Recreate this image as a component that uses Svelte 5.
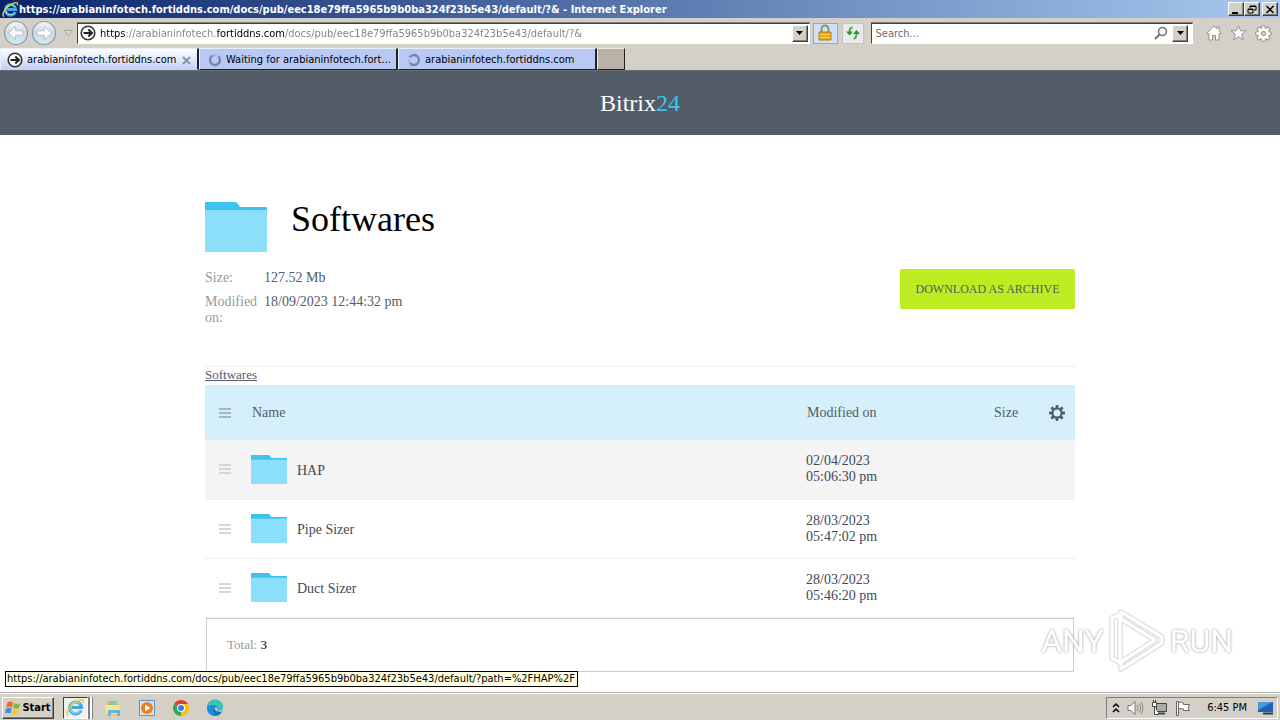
<script lang="ts">
  const host = 'arabianinfotech.fortiddns.com'
  const url = `https://${host}/docs/pub/eec18e79ffa5965b9b0ba324f23b5e43/default/`

  let address = $state(`${url}?&`)
  let search = $state('')

  const folders = [
    { name: 'HAP', date: '02/04/2023', time: '05:06:30 pm' },
    { name: 'Pipe Sizer', date: '28/03/2023', time: '05:47:02 pm' },
    { name: 'Duct Sizer', date: '28/03/2023', time: '05:46:20 pm' },
  ]

  // one gear tooth every 45 degrees
  const teeth = [0, 45, 90, 135, 180, 225, 270, 315]
</script>

{#snippet ie(size: number)}
  <svg width={size} height={size} viewBox="0 0 18 18" aria-hidden="true">
    <path d="M14.2 11.8A5.600 5.600 0 1 1 14.700 9H5.500" fill="none" stroke="#3ba9ea" stroke-width="3" />
    <path d="M13.500 12A5.200 5.200 0 0 1 4 10.500M4.500 6.500A5.400 5.400 0 0 1 13.500 6" fill="none" stroke="#a5e0fb" stroke-width="1" />
    <path d="M2.200 16.600C-1 15 3 8 8 4.600S17.500.3 16.300 4.600" fill="none" stroke="#f3c92f" stroke-width="1.500" />
  </svg>
{/snippet}

{#snippet favicon()}
  <svg width="16" height="16" viewBox="0 0 16 16" aria-hidden="true">
    <circle cx="8" cy="8" r="6.800" fill="#fff" stroke="#333" stroke-width="1.600" />
    <path d="M3.500 8h8M8.300 4.500 12 8l-3.700 3.500" fill="none" stroke="#222" stroke-width="2" />
  </svg>
{/snippet}

{#snippet spinner(turn: number)}
  <svg width="14" height="14" viewBox="0 0 14 14" aria-hidden="true">
    <g transform="rotate({turn} 7 7)" fill="none" stroke-width="2.400">
      <path d="M7 2a5 5 0 1 1-4.600 3" stroke="#7a86a4" />
      <path d="M2.400 5A5 5 0 0 1 5 2.400" stroke="#a9b4d8" />
    </g>
  </svg>
{/snippet}

{#snippet arrow(flip: boolean)}
  <svg width="26" height="26" viewBox="0 0 26 26" aria-hidden="true">
    <circle cx="13" cy="13" r="11.500" fill="url(#orb)" stroke="#8c99a6" stroke-width="1.200" />
    <path
      transform={flip ? 'rotate(180 13 13)' : undefined}
      d="M5.500 13l7-6.500v4.300h7.500v4.400h-7.500v4.300z"
      fill="#fff"
      stroke="#a9b6c2"
      stroke-width=".8"
    />
  </svg>
{/snippet}

{#snippet folder(width: number, height: number)}
  <svg {width} {height} viewBox="0 0 62 50" preserveAspectRatio="none" aria-hidden="true">
    <path d="M0 1q0-1 1-1h29q2 0 3 2l2 3h26q1 0 1 1v8H0z" fill="#3cc4ef" />
    <path d="M0 8h62v41q0 1-1 1H1q-1 0-1-1z" fill="#8bdffa" />
  </svg>
{/snippet}

{#snippet lines()}
  <svg width="12" height="10" viewBox="0 0 12 10" aria-hidden="true">
    <path d="M0 1h12M0 5h12M0 9h12" stroke="currentColor" stroke-width="1.600" />
  </svg>
{/snippet}

{#snippet caret()}
  <svg width="7" height="4" viewBox="0 0 7 4" aria-hidden="true"><path d="M0 0h7L3.500 4z" fill="#000" /></svg>
{/snippet}

<div class="screen">
  <svg class="defs" width="0" height="0" aria-hidden="true">
    <linearGradient id="orb" x1="0" y1="0" x2="0" y2="1">
      <stop offset="0" stop-color="#f6f8fa" />
      <stop offset=".5" stop-color="#ccd7e0" />
      <stop offset="1" stop-color="#d3edf6" />
    </linearGradient>
  </svg>

  <header class="titlebar">
    {@render ie(17)}
    <span class="title">{url}?& - Internet Explorer</span>
    <div class="window-buttons">
      <button class="raised" aria-label="Minimize">
        <svg width="10" height="9" viewBox="0 0 10 9"><path d="M1 8h6" stroke="#000" stroke-width="2" /></svg>
      </button>
      <button class="raised" aria-label="Restore">
        <svg width="10" height="9" viewBox="0 0 10 9">
          <path d="M3 3V1h6v4H7M3 1.500h6" fill="none" stroke="#000" />
          <path d="M1 4h5v4H1zM1 4.500h5" fill="none" stroke="#000" />
        </svg>
      </button>
      <button class="raised close" aria-label="Close">
        <svg width="10" height="9" viewBox="0 0 10 9"><path d="M1.500 1l7 7M8.500 1l-7 7" stroke="#000" stroke-width="1.500" /></svg>
      </button>
    </div>
  </header>

  <div class="toolbar">
    <nav class="history">
      <button aria-label="Back">{@render arrow(false)}</button>
      <button aria-label="Forward">{@render arrow(true)}</button>
      <button class="recent" aria-label="Recent pages">
        <svg width="9" height="6" viewBox="0 0 9 6"><path d="M.5.500h8l-4 5z" fill="#dedbd4" stroke="#aaa69d" /></svg>
      </button>
    </nav>
    <div class="field address">
      {@render favicon()}
      <input aria-label="Address" bind:value={address} spellcheck="false" />
      <button class="raised drop" aria-label="Show addresses">{@render caret()}</button>
    </div>
    <button class="tool lock" aria-label="Security report">
      <svg width="16" height="18" viewBox="0 0 16 18">
        <path d="M4.500 9V5a3.500 3.500 0 0 1 7 0v4" fill="none" stroke="#9b8b5a" stroke-width="2" />
        <path d="M2 8h12v8H2z" fill="#e5a91f" stroke="#b57d10" />
        <path d="M2.500 10.500h11M2.500 13.500h11" stroke="#f8d76a" />
      </svg>
    </button>
    <button class="tool" aria-label="Refresh">
      <svg width="16" height="16" viewBox="0 0 16 16">
        <path d="M7.500 2.500Q4.500 2.500 4.500 7M8.500 13.500q3 0 3-5" fill="none" stroke="#4da94f" stroke-width="2" />
        <path d="M1 6.500h7l-3.500 4zM8 9h7l-3.500-4z" fill="#2f9134" />
      </svg>
    </button>
    <div class="field search">
      <input aria-label="Search" placeholder="Search..." bind:value={search} />
      <button class="plain" aria-label="Search the web">
        <svg width="14" height="14" viewBox="0 0 14 14">
          <circle cx="8.500" cy="5.500" r="4" fill="none" stroke="#777" stroke-width="1.600" />
          <path d="M5.500 8.500L1 13" stroke="#777" stroke-width="2.200" />
        </svg>
      </button>
      <button class="raised drop" aria-label="Search providers">{@render caret()}</button>
    </div>
    <div class="commands">
      <button class="plain" aria-label="Home">
        <svg width="16" height="16" viewBox="0 0 16 16">
          <path d="M8 1L.8 8l1.400 1L3 8.500V15h3.500v-4.500h3V15H13V8.500l.8.500 1.400-1L13 5.800V2h-2v2z" fill="#fff" stroke="#929292" />
        </svg>
      </button>
      <button class="plain" aria-label="Favorites">
        <svg width="17" height="16" viewBox="0 0 17 16">
          <path d="M8.500.8l2 5h5.500l-4.300 3.500 1.600 5.500-4.800-3.200-4.800 3.200 1.600-5.500L1 5.800h5.500z" fill="#fff" stroke="#929292" />
        </svg>
      </button>
      <button class="plain" aria-label="Tools">
        <svg width="17" height="17" viewBox="-8.500 -8.500 17 17">
          {#each teeth as turn}
            <path transform="rotate({turn})" d="M-2-5l.6-2.800h2.800L2-5" fill="#fff" stroke="#929292" />
          {/each}
          <circle r="5.200" fill="#fff" />
          <circle r="2.200" fill="#d4d0c8" stroke="#929292" />
        </svg>
      </button>
    </div>
  </div>

  <div class="tabs" role="tablist">
    <div class="tab active">
      {@render favicon()}
      <button class="label" role="tab" aria-selected="true">{host}</button>
      <button class="plain" aria-label="Close tab">
        <svg width="9" height="9" viewBox="0 0 9 9"><path d="M1 1l7 7M8 1L1 8" stroke="#8b8fa0" stroke-width="1.800" /></svg>
      </button>
    </div>
    <div class="tab">
      {@render spinner(40)}
      <button class="label" role="tab" aria-selected="false">Waiting for arabianinfotech.fort...</button>
    </div>
    <div class="tab">
      {@render spinner(-60)}
      <button class="label" role="tab" aria-selected="false">{host}</button>
    </div>
    <button class="new-tab" aria-label="New tab"></button>
  </div>

  <main>
    <div class="brand">Bitrix<span>24</span></div>

    <div class="content">
      <div class="heading">
        {@render folder(62, 50)}
        <h1>Softwares</h1>
      </div>

      <div class="info">
        <dl>
          <dt>Size:</dt>
          <dd>127.52 Mb</dd>
          <dt>Modified on:</dt>
          <dd>18/09/2023 12:44:32 pm</dd>
        </dl>
        <button class="download">DOWNLOAD AS ARCHIVE</button>
      </div>

      <div class="crumbs"><a href="#softwares">Softwares</a></div>

      <table>
        <colgroup>
          <col class="col-drag" /><col /><col class="col-date" /><col class="col-size" /><col class="col-gear" />
        </colgroup>
        <thead>
          <tr>
            <th class="drag">{@render lines()}</th>
            <th>Name</th>
            <th>Modified on</th>
            <th>Size</th>
            <th>
              <button class="plain" aria-label="Configure columns">
                <svg width="16" height="16" viewBox="-8 -8 16 16">
                  {#each teeth as turn}
                    <path transform="rotate({turn})" d="M-1.700-4.500l.5-3.500h2.400l.5 3.500z" fill="#535c69" />
                  {/each}
                  <circle r="4.500" fill="none" stroke="#535c69" stroke-width="2" />
                </svg>
              </button>
            </th>
          </tr>
        </thead>
        <tbody>
          {#each folders as item, i}
            <tr class:hover={i === 0}>
              <td class="drag">{@render lines()}</td>
              <td>
                <a class="file" href="#{item.name}">
                  {@render folder(36, 29)}
                  <span>{item.name}</span>
                </a>
              </td>
              <td>{item.date}<br />{item.time}</td>
              <td></td>
              <td></td>
            </tr>
          {/each}
        </tbody>
      </table>

      <div class="total"><span>Total:</span> {folders.length}</div>
    </div>

    <div class="status">{url}?path=%2FHAP%2F</div>

    <div class="watermark">
      <span>ANY</span>
      <svg width="58" height="66" viewBox="0 0 58 66" aria-hidden="true">
        <g fill="none" stroke-linejoin="round">
          <g stroke="#dcdcdc" stroke-width="6">
            <path d="M12 7v48l-8-5V10z" />
            <path d="M13 4l41 25v6L13 61v-7l34-22-34-21z" />
          </g>
          <g stroke="#fff" stroke-width="3">
            <path d="M12 7v48l-8-5V10z" />
            <path d="M13 4l41 25v6L13 61v-7l34-22-34-21z" />
          </g>
        </g>
      </svg>
      <span>RUN</span>
    </div>
  </main>

  <footer class="taskbar">
    <button class="raised start">
      <svg width="17" height="16" viewBox="0 0 17 16" aria-hidden="true">
        <path d="M2.500 2.500q3-2 5.500 0L7 7.500q-3-1.500-5.800 0z" fill="#ec6a2c" />
        <path d="M9 3q3 1.800 6.500 0l-1.500 5q-3 1.500-6 0z" fill="#7fba3c" />
        <path d="M1 8.500q3-1.600 5.800 0l-1.300 5q-3-1.600-5.500 0z" fill="#3f8fdc" />
        <path d="M7.800 9q3 1.600 6 0l-1.500 5q-3 1.600-5.800 0z" fill="#f6c734" />
      </svg>
      Start
    </button>
    <div class="apps">
      <button class="running" aria-label="Internet Explorer">{@render ie(19)}</button>
      <button class="plain" aria-label="Explorer">
        <svg width="18" height="18" viewBox="0 0 18 18">
          <path d="M2 3h5l1 2h7v11H2z" fill="#e9c75a" />
          <path d="M4 2h9v5H4z" fill="#8fc79b" />
          <path d="M1 6h14l1 9H2z" fill="#f8e695" />
          <path d="M4 17v-6h12v6h-3v-3H7v3z" fill="#68b3e3" />
        </svg>
      </button>
      <button class="plain" aria-label="Media Player">
        <svg width="18" height="18" viewBox="0 0 18 18">
          <path d="M1.500 1.500h15v15h-15z" fill="#cfe5f7" stroke="#5794ca" />
          <circle cx="9" cy="9" r="6" fill="#f07f13" />
          <path d="M7 5.500L12.500 9 7 12.500z" fill="#fff" />
        </svg>
      </button>
      <button class="plain" aria-label="Chrome">
        <svg width="18" height="18" viewBox="0 0 18 18">
          <path d="M9 9L2.100 5A8 8 0 0 1 15.900 5z" fill="#e33b2e" />
          <path d="M9 9l6.900-4A8 8 0 0 1 9 17z" fill="#fbc116" />
          <path d="M9 9v8A8 8 0 0 1 2.100 5z" fill="#2da94f" />
          <path d="M9 5h6.900A8 8 0 0 1 9 17l3.500-6z" fill="#fbc116" />
          <circle cx="9" cy="9" r="4" fill="#fff" />
          <circle cx="9" cy="9" r="3" fill="#3f7ee8" />
        </svg>
      </button>
      <button class="plain" aria-label="Edge">
        <svg width="18" height="18" viewBox="0 0 18 18">
          <circle cx="9" cy="9" r="8" fill="#1474c9" />
          <path d="M1 8a8 8 0 0 1 16 .5c0 3-3.500 4-6 2.800 1.500-3-1-4.800-4-4.800-3 0-5 1-6 1.500z" fill="#38c3b8" />
          <path d="M1 8.500c2-3.500 7.500-3.200 8-.5-3 1.500-2.500 6.500 1.500 8.800C5 18 1 13 1 8.500z" fill="#1b8fe0" />
          <path d="M9 8.500c-1 2 1.500 5 7 4l2-3-1-.5c-1 3-4 3-6 2.300.7-1 .3-2.300-.5-2.800z" fill="#d4d0c8" />
        </svg>
      </button>
    </div>
    <div class="tray">
      <svg width="8" height="11" viewBox="0 0 8 11" aria-hidden="true">
        <path d="M1 5l3-3 3 3M1 10l3-3 3 3" fill="none" stroke="#000" stroke-width="1.500" />
      </svg>
      <svg width="17" height="16" viewBox="0 0 17 16" aria-hidden="true">
        <path d="M1 5.500h3l4-4v13l-4-4H1z" fill="#fff" stroke="#777" />
        <path d="M10 5q2 3 0 6M12 3.500q3.500 4.500 0 9M14 2q4 6 0 12" fill="none" stroke="#888" />
      </svg>
      <svg width="17" height="16" viewBox="0 0 17 16" aria-hidden="true">
        <path d="M5.500 3.500h10v8h-10z" fill="#aaa" stroke="#444" />
        <path d="M7 13.500h7" stroke="#444" stroke-width="2" />
        <path d="M1.500 2.500h4v4h-4zM3.500 6.500v8h4M2.500 0v2M4.500 0v2" fill="#fff" stroke="#444" />
      </svg>
      <svg width="17" height="16" viewBox="0 0 17 16" aria-hidden="true">
        <path d="M1.500 1.500h2v14h-2z" fill="#fff" stroke="#666" />
        <path d="M3.500 2.500q3-1 5 .500v1.500h6l-1.500 3 1.500 3H8.500V9q-2-1-5 0z" fill="#fff" stroke="#666" />
      </svg>
      <time>6:45 PM</time>
      <svg width="16" height="14" viewBox="0 0 16 14" aria-hidden="true">
        <path d="M0 1h15v10H0z" fill="#1c62b8" />
        <path d="M0 1h15L0 9z" fill="#4f97dc" />
        <path d="M5 12.500h10" stroke="#223a60" stroke-width="2" />
      </svg>
    </div>
  </footer>
</div>

<style>
  :global(body) {
    margin: 0;
    background: #fff;
  }

  .screen {
    min-height: 100vh;
    display: flex;
    flex-direction: column;
    font: 11px/14px 'DejaVu Sans Condensed', 'DejaVu Sans', sans-serif;
    color: #000;
  }

  .screen * {
    box-sizing: border-box;
  }

  .defs {
    position: absolute;
  }

  svg {
    display: block;
    flex: none;
  }

  button {
    display: flex;
    align-items: center;
    justify-content: center;
    flex: none;
    margin: 0;
    padding: 0;
    border: 0;
    background: none;
    color: inherit;
    font: inherit;
  }

  input {
    flex: 1;
    min-width: 0;
    padding: 2px 0 0;
    border: 0;
    outline: 0;
    background: none;
    font: inherit;
  }

  .raised {
    background: #d4d0c8;
    border: 1px solid;
    border-color: #fff #404040 #404040 #fff;
    box-shadow: inset -1px -1px #808080;
  }

  .titlebar {
    height: 18px;
    display: flex;
    align-items: center;
    padding: 0 2px;
    background: linear-gradient(90deg, #0a246a, #a6caf0);
    color: #fff;
    font-weight: bold;
  }

  .title {
    flex: 1;
    min-width: 0;
    padding-top: 1px;
    overflow: hidden;
    white-space: nowrap;
  }

  .window-buttons {
    display: flex;
  }

  .window-buttons button {
    width: 16px;
    height: 14px;
  }

  .window-buttons .close {
    margin-left: 2px;
  }

  .toolbar {
    height: 30px;
    display: flex;
    align-items: center;
    padding: 0 8px 0 3px;
    background: #d4d0c8;
  }

  .history {
    display: flex;
    gap: 2px;
  }

  .history .recent {
    width: 18px;
  }

  .field {
    height: 21px;
    display: flex;
    align-items: center;
    gap: 4px;
    padding: 0 1px;
    background: #fff;
    border: 1px solid;
    border-color: #404040 #fff #fff #404040;
    box-shadow: 0 -1px #808080;
  }

  .address {
    flex: 738;
    padding-left: 2px;
  }

  /* scheme and domain are black, the rest of the address is grey */
  .address input {
    color: #777;
    -webkit-text-fill-color: transparent;
    background: linear-gradient(90deg, #000 26px, #808080 26px 117px, #000 117px 185px, #808080 185px);
    background-clip: text;
  }

  .drop {
    width: 16px;
    height: 17px;
  }

  .tool {
    width: 22px;
    height: 21px;
    margin-left: 4px;
    background: #e6eaea;
    border: 1px solid #c2c5c5;
  }

  .lock {
    width: 25px;
    margin-left: 3px;
    background: #cfe2f8;
    border-color: #80aee0;
  }

  .search {
    flex: 317;
    margin-left: 7px;
    margin-right: 13px;
    padding-left: 4px;
    padding-right: 4px;
  }

  .search input::placeholder {
    color: #6d6d6d;
  }

  .commands {
    display: flex;
    gap: 8px;
  }

  .tabs {
    height: 23px;
    display: flex;
    background: #d4d0c8;
    border-bottom: 1px solid #6a6d70;
  }

  .tab {
    width: 199px;
    display: flex;
    align-items: center;
    gap: 4px;
    padding: 2px 4px 0 8px;
    background: #b9c9f6;
    border: 1px solid;
    border-color: #e9eefc #222 #222 #e9eefc;
    border-right-width: 2px;
  }

  .tab.active {
    padding-left: 6px;
    padding-right: 6px;
    background: linear-gradient(180deg, #fff, #c3d2f8);
    border-bottom-color: #c3d2f8;
  }

  .tab .label {
    flex: 1;
    justify-content: flex-start;
    min-width: 0;
    white-space: nowrap;
  }

  .new-tab {
    width: 28px;
    background: #b8b2a7;
    border: 1px solid;
    border-color: #ece9e3 #222 #222 #ece9e3;
  }

  main {
    flex: 1;
    position: relative;
    font: 14px/16px 'Liberation Serif', 'Times New Roman', serif;
    color: #535c69;
  }

  .brand {
    height: 64px;
    background: #535c69;
    color: #fff;
    font-size: 24px;
    line-height: 64px;
    text-align: center;
  }

  .brand span {
    color: #3ac4ef;
  }

  .content {
    max-width: 870px;
    margin: 0 auto;
    padding: 67px 0 20px;
  }

  .heading {
    display: flex;
    gap: 24px;
  }

  h1 {
    margin: 0;
    color: #000;
    font-size: 36px;
    font-weight: normal;
    line-height: 34px;
  }

  .info {
    display: flex;
    justify-content: space-between;
    align-items: flex-start;
    padding: 17px 0 40px;
  }

  dl {
    display: grid;
    grid-template-columns: 53px auto;
    gap: 8px 6px;
    margin: 0;
    padding-top: 1px;
  }

  dt {
    color: #999;
  }

  dd {
    margin: 0;
  }

  .download {
    width: 175px;
    height: 40px;
    border-radius: 2px;
    background: #bbed21;
    font-size: 12px;
  }

  .crumbs {
    height: 19px;
    border-top: 1px solid #eee;
    font-size: 13px;
  }

  .crumbs a {
    color: inherit;
  }

  table {
    width: 100%;
    table-layout: fixed;
    border-collapse: collapse;
  }

  .col-drag {
    width: 46px;
  }

  .col-date {
    width: 187px;
  }

  .col-size {
    width: 55px;
  }

  .col-gear {
    width: 27px;
  }

  th,
  td {
    padding: 0;
    text-align: left;
    font-weight: normal;
  }

  th {
    height: 55px;
    padding-left: 1px;
    background: #d5effb;
  }

  td {
    height: 59px;
    border-bottom: 1px solid #eee;
    color: #424956;
  }

  .hover td {
    background: #f4f4f4;
  }

  .drag {
    padding-left: 14px;
    color: #ccc;
  }

  th.drag {
    color: #94a5b0;
  }

  .file {
    display: flex;
    align-items: center;
    gap: 10px;
    color: inherit;
    text-decoration: none;
  }

  .file span {
    padding-top: 3px;
  }

  .total {
    margin: 0 1px;
    padding: 18px 20px;
    border: 1px solid #ccc;
    color: #000;
    font-size: 13px;
  }

  .total span {
    color: #999;
  }

  .status {
    position: absolute;
    left: 5px;
    bottom: 5px;
    padding: 0 2px 0 1px;
    border: 1px solid #000;
    background: #ffffe1;
    color: #000;
    font: 11px/14px 'DejaVu Sans Condensed', 'DejaVu Sans', sans-serif;
    white-space: nowrap;
  }

  .watermark {
    position: absolute;
    right: 47px;
    bottom: 18px;
    display: flex;
    align-items: center;
    gap: 4px;
    color: #fff;
    opacity: 0.8;
    font: 32px/60px Roboto, sans-serif;
    text-shadow: 0 0 3px #999, 0 0 2px #bbb;
  }

  .taskbar {
    height: 28px;
    display: flex;
    align-items: center;
    padding: 2px 2px 0;
    background: #d4d0c8;
    border-top: 1px solid #b5b2aa;
    box-shadow: inset 0 1px #fff;
  }

  .start {
    width: 52px;
    height: 22px;
    font-weight: bold;
  }

  .apps {
    flex: 1;
    display: flex;
    align-items: center;
    gap: 16px;
    padding-left: 9px;
  }

  .running {
    width: 25px;
    height: 22px;
    background: #f2f0ed;
    border: 1px solid;
    border-color: #404040 #fff #fff #404040;
    box-shadow: 2px 0 #808080, 4px 0 #fff, 5px 0 #808080;
  }

  .tray {
    height: 22px;
    display: flex;
    align-items: center;
    gap: 7px;
    padding: 0 3px 0 5px;
    border: 1px solid;
    border-color: #808080 #fff #fff #808080;
  }

  .tray time {
    padding: 0 4px 0 8px;
  }
</style>
